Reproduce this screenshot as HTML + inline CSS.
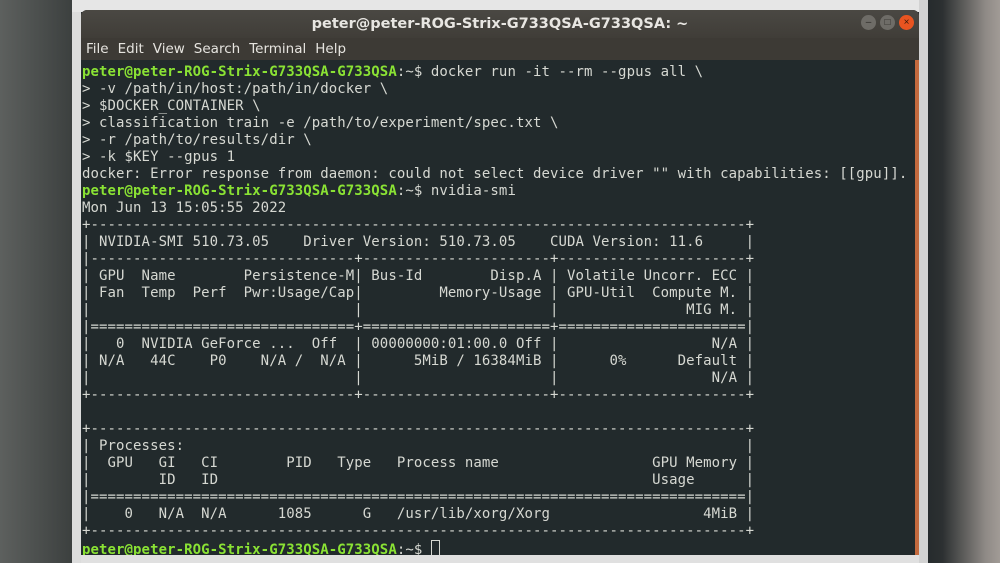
<!DOCTYPE html>
<html><head><meta charset="utf-8"><style>
html,body{margin:0;padding:0;width:1000px;height:563px;overflow:hidden;background:#2a2e30;}
.bgl{position:absolute;left:0;top:0;width:72px;height:563px;background:linear-gradient(90deg,#5d605e,#3c403f);}
.wl{position:absolute;left:72px;top:0;width:9px;height:563px;background:#dcdcdc;}
.topbg{position:absolute;left:72px;top:0;width:856px;height:12px;background:#e6e6e6;}
.bgr{position:absolute;left:928px;top:0;width:72px;height:563px;background:linear-gradient(90deg,#262b2d,#2c3031 20%,#8f8a86 80%,#a19b96);}
.rl{position:absolute;left:919px;top:0;width:9px;height:563px;background:#d2d2d2;}
.win{position:absolute;left:81px;top:10px;width:838px;height:553px;background:#222a2c;border-radius:6px 6px 0 0;overflow:hidden;}
.title{height:28px;background:linear-gradient(#4a4843,#403d38);color:#e8e6e2;font:bold 14.5px "DejaVu Sans","Liberation Sans",sans-serif;text-align:center;line-height:28px;}
.menu{height:22px;background:#3d3a35;color:#e6e4df;font:13.5px "DejaVu Sans","Liberation Sans",sans-serif;line-height:22px;padding-left:5px;word-spacing:2px;}
.menu span{margin-right:9px}
.btn{position:absolute;top:5px;width:15px;height:15px;border-radius:50%;background:#6e6c67;color:#2e2c28;font:10px sans-serif;text-align:center;line-height:15px;}
pre{margin:0;position:absolute;left:1px;top:53.5px;font-family:"DejaVu Sans Mono","Liberation Mono",monospace;font-size:14px;letter-spacing:0.08px;line-height:17px;color:#d6d8d2;}
.g{color:#8ae234;font-weight:bold}
.scr{position:absolute;left:834px;top:50px;width:4px;height:503px;background:#c46a3e;}
.bot{position:absolute;left:81px;top:555px;width:838px;height:8px;background:#e0e0e0;}
</style></head><body>
<div class="bgl"></div><div class="wl"></div><div class="topbg"></div><div class="rl"></div><div class="bgr"></div>
<div class="win">
<div class="title">peter@peter-ROG-Strix-G733QSA-G733QSA: ~</div>
<div class="btn" style="left:780px">–</div>
<div class="btn" style="left:799px">□</div>
<div class="btn" style="left:818px;background:#e95420;color:#3a1a0a">×</div>
<div class="menu"><span>File</span><span>Edit</span><span>View</span><span>Search</span><span>Terminal</span><span>Help</span></div>
<div class="scr"></div>
<pre><span class="g">peter@peter-ROG-Strix-G733QSA-G733QSA</span>:~$ docker run -it --rm --gpus all \
> -v /path/in/host:/path/in/docker \
> $DOCKER_CONTAINER \
> classification train -e /path/to/experiment/spec.txt \
> -r /path/to/results/dir \
> -k $KEY --gpus 1
docker: Error response from daemon: could not select device driver "" with capabilities: [[gpu]].
<span class="g">peter@peter-ROG-Strix-G733QSA-G733QSA</span>:~$ nvidia-smi
Mon Jun 13 15:05:55 2022       
+-----------------------------------------------------------------------------+
| NVIDIA-SMI 510.73.05    Driver Version: 510.73.05    CUDA Version: 11.6     |
|-------------------------------+----------------------+----------------------+
| GPU  Name        Persistence-M| Bus-Id        Disp.A | Volatile Uncorr. ECC |
| Fan  Temp  Perf  Pwr:Usage/Cap|         Memory-Usage | GPU-Util  Compute M. |
|                               |                      |               MIG M. |
|===============================+======================+======================|
|   0  NVIDIA GeForce ...  Off  | 00000000:01:00.0 Off |                  N/A |
| N/A   44C    P0    N/A /  N/A |      5MiB / 16384MiB |      0%      Default |
|                               |                      |                  N/A |
+-------------------------------+----------------------+----------------------+
                                                                               
+-----------------------------------------------------------------------------+
| Processes:                                                                  |
|  GPU   GI   CI        PID   Type   Process name                  GPU Memory |
|        ID   ID                                                   Usage      |
|=============================================================================|
|    0   N/A  N/A      1085      G   /usr/lib/xorg/Xorg                  4MiB |
+-----------------------------------------------------------------------------+
<span class="g">peter@peter-ROG-Strix-G733QSA-G733QSA</span>:~$ <span style="display:inline-block;width:7px;height:15px;border:1px solid #d6d8d2;vertical-align:-3px"></span></pre>
</div>
<div class="bot"></div>
</body></html>
